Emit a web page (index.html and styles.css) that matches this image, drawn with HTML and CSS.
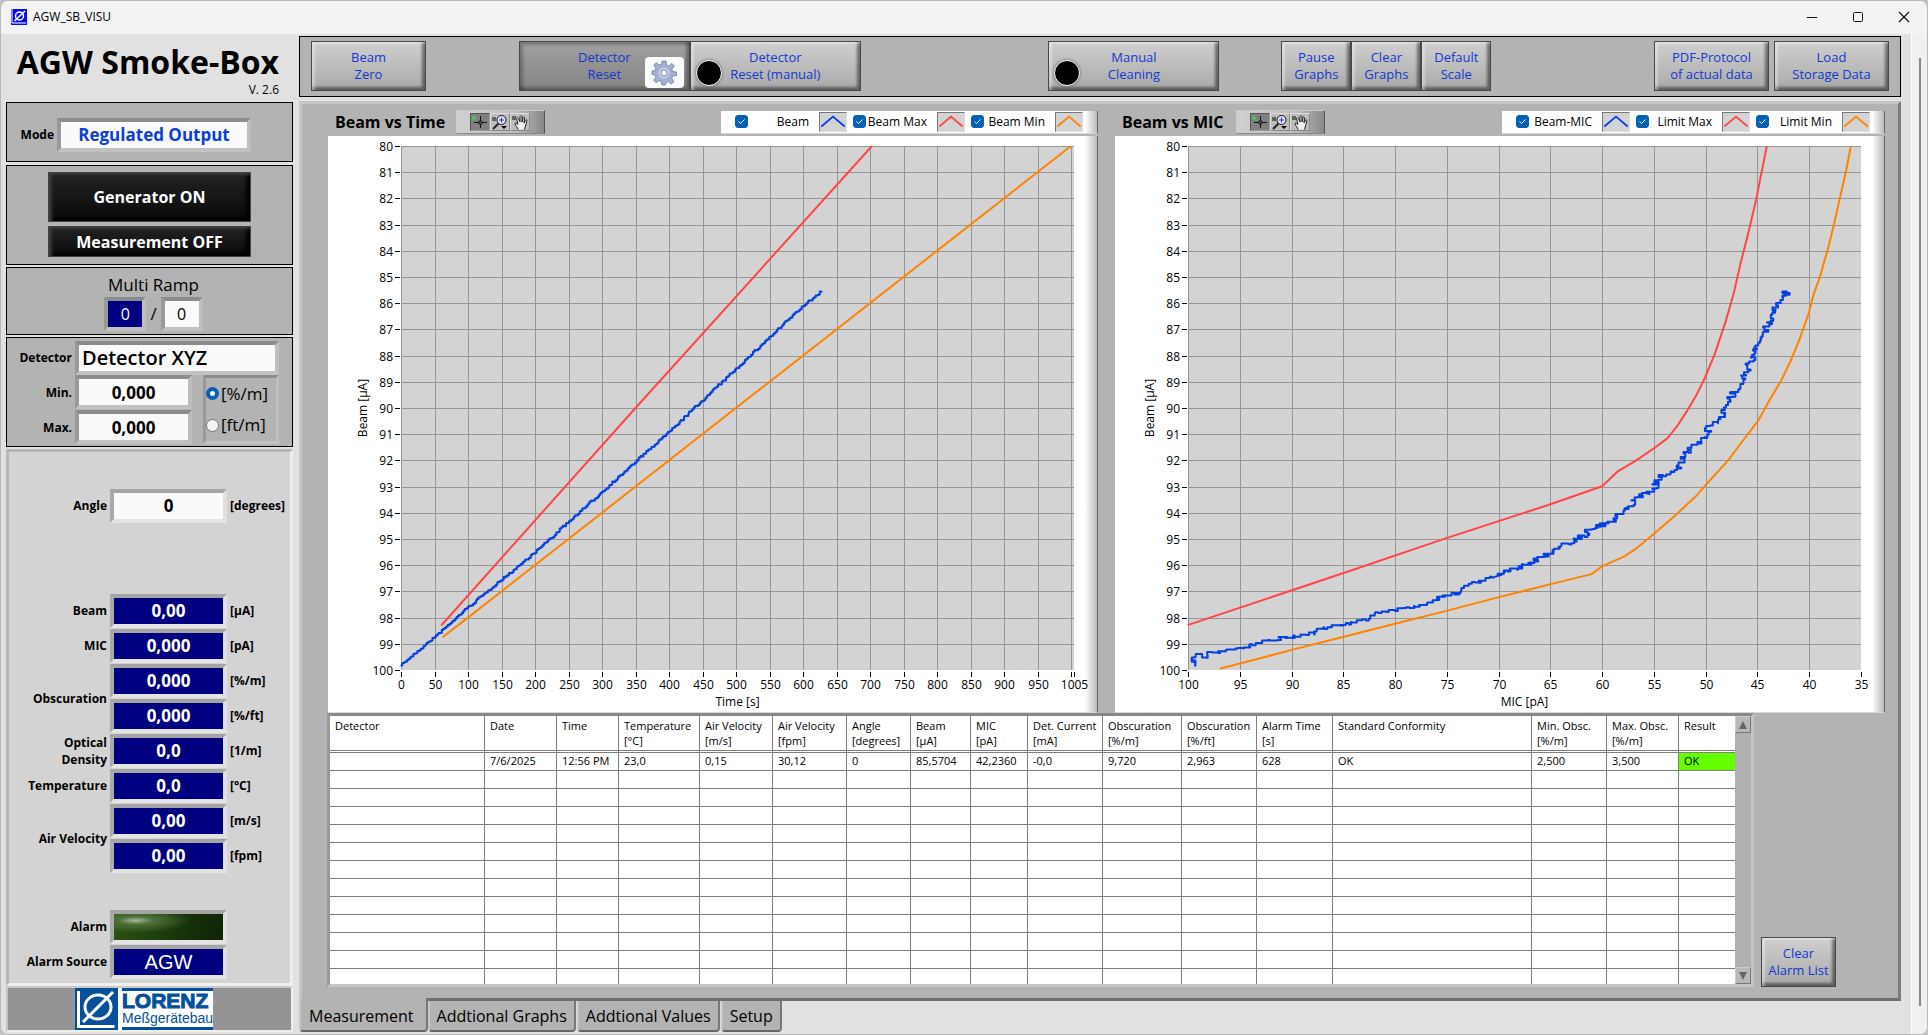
FILE: index.html
```html
<!DOCTYPE html>
<html lang="en">
<head>
<meta charset="utf-8">
<title>AGW_SB_VISU</title>
<link rel="stylesheet" href="styles.css">
</head>
<body>
<div class="window">
  <header class="titlebar">
    <svg class="app-icon" width="16" height="16" viewBox="0 0 16 16"><rect width="16" height="16" fill="#0a0af0"/><path d="M1 0v14h14" fill="none" stroke="#fff"/><circle cx="8.500" cy="7" r="4" fill="none" stroke="#fff" stroke-width="1.500"/><path d="M3.500 12 14 2" stroke="#fff" stroke-width="1.500"/></svg>
    <span class="titlebar-text">AGW_SB_VISU</span>
    <div class="window-controls">
      <button class="window-button" aria-label="Minimize"><svg width="12" height="12" viewBox="0 0 12 12"><path d="M1 6.500h10" stroke="#111"/></svg></button>
      <button class="window-button" aria-label="Maximize"><svg width="12" height="12" viewBox="0 0 12 12"><rect x="1.500" y="1.500" width="9" height="9" rx="1" fill="none" stroke="#111"/></svg></button>
      <button class="window-button" aria-label="Close"><svg width="12" height="12" viewBox="0 0 12 12"><path d="M1 1l10 10M11 1 1 11" stroke="#111" stroke-width="1.200"/></svg></button>
    </div>
  </header>

  <div class="body">
    <aside class="side">
      <div class="brand">
        <h1 class="brand-name">AGW Smoke-Box</h1>
        <div class="brand-version">V. 2.6</div>
      </div>

      <section class="box box-mode">
        <label class="label" for="mode">Mode</label>
        <input class="field field-mode" id="mode" value="Regulated Output" readonly>
      </section>

      <section class="box box-power">
        <button class="power power-tall">Generator ON</button>
        <button class="power">Measurement OFF</button>
      </section>

      <section class="box box-ramp">
        <div class="ramp-title">Multi Ramp</div>
        <div class="ramp-row">
          <output class="field field-ramp field-navy">0</output>
          <span class="ramp-slash">/</span>
          <input class="field field-ramp" value="0" aria-label="Ramp count">
        </div>
      </section>

      <section class="box box-detector">
        <label class="label" for="detector">Detector</label>
        <input class="field field-name" id="detector" value="Detector XYZ">
        <label class="label" for="min">Min.</label>
        <input class="field" id="min" value="0,000">
        <label class="label" for="max">Max.</label>
        <input class="field field-max" id="max" value="0,000">
        <div class="units">
          <label class="unit-choice"><input class="radio" type="radio" name="unit" checked>[%/m]</label>
          <label class="unit-choice"><input class="radio" type="radio" name="unit">[ft/m]</label>
        </div>
      </section>

      <section class="readouts">
        <div class="readout-grid">
          <label class="label" for="angle">Angle</label>
          <input class="field" id="angle" value="0"><span class="unit">[degrees]</span>
        </div>
        <div class="readout-grid readout-values">
          <label class="label" for="beam">Beam</label>
          <output class="field field-navy" id="beam">0,00</output><span class="unit">[µA]</span>
          <label class="label" for="mic">MIC</label>
          <output class="field field-navy" id="mic">0,000</output><span class="unit">[pA]</span>
          <label class="label label-double" for="obsc">Obscuration</label>
          <output class="field field-navy" id="obsc">0,000</output><span class="unit">[%/m]</span>
          <output class="field field-navy">0,000</output><span class="unit">[%/ft]</span>
          <label class="label" for="density">Optical<br>Density</label>
          <output class="field field-navy" id="density">0,0</output><span class="unit">[1/m]</span>
          <label class="label" for="temp">Temperature</label>
          <output class="field field-navy" id="temp">0,0</output><span class="unit">[°C]</span>
          <label class="label label-double" for="air">Air Velocity</label>
          <output class="field field-navy" id="air">0,00</output><span class="unit">[m/s]</span>
          <output class="field field-navy">0,00</output><span class="unit">[fpm]</span>
        </div>
        <div class="readout-grid">
          <span class="label">Alarm</span>
          <span class="field field-led"></span><span></span>
          <label class="label" for="source">Alarm Source</label>
          <output class="field field-navy field-source" id="source">AGW</output><span></span>
        </div>
      </section>

      <div class="logo-bar">
        <div class="logo">
          <svg width="43" height="42" viewBox="0 0 43 42"><rect width="43" height="42" fill="#05509c"/><path d="M3.500 3v35.500h36" fill="none" stroke="#fff" stroke-width="3"/><ellipse cx="23" cy="19" rx="13" ry="12" fill="none" stroke="#fff" stroke-width="3"/><path d="M8 34 38 4" stroke="#fff" stroke-width="3"/></svg>
          <div class="logo-text"><span class="logo-name">LORENZ</span><span class="logo-sub">Meßgerätebau</span></div>
        </div>
      </div>
    </aside>

    <main class="main">
      <div class="toolbar">
        <button class="btn btn-mid">Beam<br>Zero</button>
        <span class="space-a"></span>
        <button class="btn btn-wide btn-pressed">Detector<br>Reset
          <span class="gear"><svg width="26" height="26" viewBox="0 0 26 26"><g fill="#a3b0d0" stroke="#7080a8" stroke-width=".8"><path d="M11 1h4l.6 4 2.200.9L21 3.400 23.300 6l-2.500 3.200.9 2.300 3.800.5v3.500l-3.800.6-1 2.300 2.300 3.200-2.600 2.500-3.200-2.400-2.200.9L14.500 25h-3.500l-.7-3.600-2.300-.9-3 2.300-2.500-2.500 2.300-3-.9-2.200L1 14.500V11l3-.5.900-2.200L2.700 5.200l2.500-2.500L8.300 5l2.200-.9z"/></g><circle cx="13" cy="13" r="5.500" fill="#c3cce4"/><circle cx="13" cy="13" r="3" fill="#fff" stroke="#8090b5"/></svg></span>
        </button>
        <button class="btn btn-wide">Detector<br>Reset (manual)<span class="led"></span></button>
        <span class="space-b"></span>
        <button class="btn btn-wide">Manual<br>Cleaning<span class="led"></span></button>
        <span class="space-c"></span>
        <button class="btn btn-small">Pause<br>Graphs</button>
        <button class="btn btn-small">Clear<br>Graphs</button>
        <button class="btn btn-small">Default<br>Scale</button>
        <span class="space-d"></span>
        <button class="btn btn-mid">PDF-Protocol<br>of actual data</button>
        <span class="space-e"></span>
        <button class="btn btn-mid">Load<br>Storage Data</button>
      </div>

      <div class="page">
        <div class="charts">
          <section class="chart chart-time">
            <div class="chart-head">
              <h2 class="chart-title">Beam vs Time</h2>
              <div class="palette">
                <button class="tool tool-on" aria-label="Cursor"><svg width="18" height="16" viewBox="0 0 18 16"><circle cx="3" cy="4" r="2" fill="#4c4"/><path d="M9.500 2v12M3 8.500h13" stroke="#111"/><circle cx="9.500" cy="8.500" r="1.800" fill="#555" stroke="#111"/></svg></button>
                <button class="tool" aria-label="Zoom"><svg width="18" height="16" viewBox="0 0 18 16"><path d="M1 3h4v4H1z" fill="#576b4d"/><circle cx="10.500" cy="6" r="4.500" fill="#e4e4ff" stroke="#111"/><path d="M8 6h5M10.500 3.500v5" stroke="#33a"/><path d="M7.500 9.500 2 15" stroke="#222" stroke-width="2"/><path d="M10 12h6l-3 3z"/></svg></button>
                <button class="tool" aria-label="Pan"><svg width="18" height="16" viewBox="0 0 18 16"><path d="M1 2h4v4H1z" fill="#576b4d"/><path d="M7 15.500c0-2-3-4-3-6 1-1 2 0 3 1L5.500 4.500c.5-1 1.500-1 2 0L9 8V2.500c.5-1 1.500-1 2 0V8l1-4.500c.5-1 1.500-.5 1.500.5L13 9l1.500-3c.5-.8 1.500-.3 1.500.7L14.500 12l-1 3.500" fill="#eee" stroke="#222"/></svg></button>
              </div>
              <div class="legend">
                <label class="legend-item"><input class="check" type="checkbox" checked><span>Beam</span><svg class="swatch swatch-blue" width="28" height="20" viewBox="0 0 28 20"><path d="M1 15 14 4l13 11"/></svg></label>
                <label class="legend-item"><input class="check" type="checkbox" checked><span>Beam Max</span><svg class="swatch swatch-red" width="28" height="20" viewBox="0 0 28 20"><path d="M1 15 14 4l13 11"/></svg></label>
                <label class="legend-item"><input class="check" type="checkbox" checked><span>Beam Min</span><svg class="swatch swatch-orange" width="28" height="20" viewBox="0 0 28 20"><path d="M1 15 14 4l13 11"/></svg></label>
              </div>
            </div>
            <div class="graph"><svg class="plot" id="time-plot" viewBox="0 0 769 576"></svg></div>
          </section>

          <section class="chart chart-mic">
            <div class="chart-head">
              <h2 class="chart-title">Beam vs MIC</h2>
              <div class="palette">
                <button class="tool tool-on" aria-label="Cursor"><svg width="18" height="16" viewBox="0 0 18 16"><circle cx="3" cy="4" r="2" fill="#4c4"/><path d="M9.500 2v12M3 8.500h13" stroke="#111"/><circle cx="9.500" cy="8.500" r="1.800" fill="#555" stroke="#111"/></svg></button>
                <button class="tool" aria-label="Zoom"><svg width="18" height="16" viewBox="0 0 18 16"><path d="M1 3h4v4H1z" fill="#576b4d"/><circle cx="10.500" cy="6" r="4.500" fill="#e4e4ff" stroke="#111"/><path d="M8 6h5M10.500 3.500v5" stroke="#33a"/><path d="M7.500 9.500 2 15" stroke="#222" stroke-width="2"/><path d="M10 12h6l-3 3z"/></svg></button>
                <button class="tool" aria-label="Pan"><svg width="18" height="16" viewBox="0 0 18 16"><path d="M1 2h4v4H1z" fill="#576b4d"/><path d="M7 15.500c0-2-3-4-3-6 1-1 2 0 3 1L5.500 4.500c.5-1 1.500-1 2 0L9 8V2.500c.5-1 1.500-1 2 0V8l1-4.500c.5-1 1.500-.5 1.500.5L13 9l1.500-3c.5-.8 1.500-.3 1.500.7L14.500 12l-1 3.500" fill="#eee" stroke="#222"/></svg></button>
              </div>
              <div class="legend">
                <label class="legend-item"><input class="check" type="checkbox" checked><span>Beam-MIC</span><svg class="swatch swatch-blue" width="28" height="20" viewBox="0 0 28 20"><path d="M1 15 14 4l13 11"/></svg></label>
                <label class="legend-item"><input class="check" type="checkbox" checked><span>Limit Max</span><svg class="swatch swatch-red" width="28" height="20" viewBox="0 0 28 20"><path d="M1 15 14 4l13 11"/></svg></label>
                <label class="legend-item"><input class="check" type="checkbox" checked><span>Limit Min</span><svg class="swatch swatch-orange" width="28" height="20" viewBox="0 0 28 20"><path d="M1 15 14 4l13 11"/></svg></label>
              </div>
            </div>
            <div class="graph"><svg class="plot" id="mic-plot" viewBox="0 0 769 576"></svg></div>
          </section>
        </div>

        <div class="log">
          <div class="log-frame">
            <div class="log-scroll">
              <table class="log-table">
                <colgroup><col class="w155"><col class="w72"><col class="w62"><col class="w81"><col class="w73"><col class="w74"><col class="w64"><col class="w60"><col class="w57"><col class="w75"><col class="w79"><col class="w75"><col class="w76"><col class="w199"><col class="w75"><col class="w72"><col class="w58"></colgroup>
                <thead><tr><th>Detector</th><th>Date</th><th>Time</th><th>Temperature<br>[°C]</th><th>Air Velocity<br>[m/s]</th><th>Air Velocity<br>[fpm]</th><th>Angle<br>[degrees]</th><th>Beam<br>[µA]</th><th>MIC<br>[pA]</th><th>Det. Current<br>[mA]</th><th>Obscuration<br>[%/m]</th><th>Obscuration<br>[%/ft]</th><th>Alarm Time<br>[s]</th><th>Standard Conformity</th><th>Min. Obsc.<br>[%/m]</th><th>Max. Obsc.<br>[%/m]</th><th>Result</th></tr></thead>
                <tbody id="log-rows"><tr><td></td><td>7/6/2025</td><td>12:56 PM</td><td>23,0</td><td>0,15</td><td>30,12</td><td>0</td><td>85,5704</td><td>42,2360</td><td>-0,0</td><td>9,720</td><td>2,963</td><td>628</td><td>OK</td><td>2,500</td><td>3,500</td><td class="pass">OK</td></tr></tbody>
              </table>
            </div>
            <div class="scrollbar">
              <button class="arrow" aria-label="Scroll up"><svg width="8" height="8" viewBox="0 0 8 8"><path d="M4 0l4 8H0z" fill="#666"/></svg></button>
              <button class="arrow" aria-label="Scroll down"><svg width="8" height="8" viewBox="0 0 8 8"><path d="M0 0h8L4 8z" fill="#666"/></svg></button>
            </div>
          </div>
          <button class="btn btn-clear">Clear<br>Alarm List</button>
        </div>
      </div>

      <nav class="tabs">
        <button class="tab tab-active">Measurement</button>
        <button class="tab">Addtional Graphs</button>
        <button class="tab">Addtional Values</button>
        <button class="tab">Setup</button>
      </nav>
    </main>

    <div class="window-scroll"><span class="window-thumb"></span></div>
  </div>
</div>
<script src="charts.js"></script>
</body>
</html>
```
FILE: styles.css
```css
* { box-sizing: border-box; }

body {
  margin: 0;
  background: #c4c4c4;
  color: #000;
  font-family: "Open Sans", "Noto Sans", sans-serif;
  font-size: 12px;
}

button, input, output { font-family: inherit; color: inherit; }
button { padding: 0; cursor: default; }
h1, h2 { margin: 0; }

.window {
  display: flex;
  flex-direction: column;
  min-height: 100vh;
  border: 1px solid #b8b8b8;
  border-radius: 8px;
  overflow: hidden;
  background: #e1e1e1;
}

/* Title bar */
.titlebar {
  display: flex;
  align-items: center;
  gap: 6px;
  height: 33px;
  padding: 0 17px 2px 10px;
  background: #f3f3f3;
}
.titlebar-text { flex: 1; line-height: 16px; }
.window-controls { display: flex; gap: 34px; }
.window-button { display: flex; width: 12px; height: 12px; border: 0; background: none; }

.body { display: flex; flex: 1; }

/* Left column */
.side {
  flex: none;
  display: flex;
  flex-direction: column;
  width: 292px;
  padding: 0 0 2px 5px;
}
.brand { height: 68px; padding: 8px 14px 0 0; text-align: right; }
.brand-name { font-size: 32px; line-height: 40px; white-space: nowrap; }
.brand-version { line-height: 16px; }

.box {
  margin-bottom: 3px;
  border: 1px solid #000;
  background: #b3b3b3;
}
.label { font-size: 12px; font-weight: 700; line-height: 17px; text-align: right; white-space: nowrap; }
.field {
  display: block;
  width: 100%;
  height: 34px;
  padding: 0 2px;
  border: 4px solid;
  border-color: #8c8c8c #bebebe #c2c2c2 #999;
  background: #fafafa;
  font-size: 17px;
  font-weight: 700;
  line-height: 26px;
  text-align: center;
  outline: 0;
}
.field-navy { background: #000080; color: #fff; }

.box-mode {
  display: flex;
  align-items: center;
  gap: 3px;
  height: 60px;
  padding: 5px 41px 0 12px;
}
.box-mode .label { width: 35px; }
.field-mode { color: #0a40d8; flex: 1; min-width: 0; }

.box-power {
  display: flex;
  flex-direction: column;
  gap: 4px;
  height: 100px;
  margin-bottom: 2px;
  padding: 6px 41px;
}
.power {
  height: 31px;
  border: 1px solid #444;
  background: linear-gradient(#232323, #090909);
  box-shadow: inset 3px 2px 3px #3a3a3a, inset -4px -3px 4px #000;
  color: #fff;
  font-size: 16px;
  font-weight: 700;
}
.power-tall { height: 50px; }

.box-ramp { height: 68px; padding: 5px 0 0 8px; margin-bottom: 2px; text-align: center; }
.ramp-title { font-size: 17px; line-height: 24px; }
.ramp-row { display: flex; justify-content: center; gap: 4px; }
.field-ramp { width: 42px; font-size: 16px; font-weight: 400; }
.ramp-slash { font-size: 17px; line-height: 34px; }

.box-detector {
  display: grid;
  grid-template-columns: 65px 117px 84px;
  grid-template-rows: 33px 34px 34px;
  gap: 1px 3px;
  align-items: center;
  height: 110px;
  padding-top: 3px;
  margin-bottom: 2px;
}
.field-name { grid-column: 2 / 4; padding-left: 3px; font-size: 20px; font-weight: 600; text-align: left; }
.field-max { grid-column: 2; }
.units {
  grid-area: 2 / 3 / 4 / 4;
  display: flex;
  flex-direction: column;
  justify-content: space-around;
  height: 69px;
  margin-left: 8px;
  border: 3px solid;
  border-color: #8c8c8c #bebebe #c2c2c2 #999;
}
.unit-choice { display: flex; align-items: center; gap: 2px; font-size: 17px; line-height: 24px; white-space: nowrap; }
.radio {
  appearance: none;
  flex: none;
  width: 13px;
  height: 13px;
  margin: 0;
  border: 1px solid #777;
  border-radius: 50%;
  background: #f4f4f4;
}
.radio:checked { border: 4px solid #0560b8; background: #fff; }

.readouts {
  flex: 1;
  padding-top: 36px;
  border: 3px solid;
  border-color: #b4b4b4 #ededed #f0f0f0 #b8b8b8;
  background: #d3d3d3;
}
.readout-grid {
  display: grid;
  grid-template-columns: 98px 117px 1fr;
  grid-auto-rows: 35px;
  column-gap: 3px;
  align-items: center;
}
.readout-values { margin: 70px 0 36px; }
.readouts .field { border-color: #a5a5a5 #e0e0e0 #e4e4e4 #aaa; }
.label-double { grid-row: span 2; }
.unit { font-size: 12px; font-weight: 700; line-height: 17px; }
.readouts .field-led {
  background: radial-gradient(ellipse at 20% 25%, #a9ba9c, #4d7038 14%, transparent 45%), linear-gradient(100deg, #2b5212, #14300a 70%, #102404);
}
.field-source { font-family: "Liberation Sans", sans-serif; font-size: 20px; font-weight: 400; }

.logo-bar {
  display: flex;
  justify-content: center;
  height: 46px;
  padding-right: 11px;
  border: 2px solid;
  border-color: #c9c9c9 #eee #eee #c4c4c4;
  background: #949494;
}
.logo { display: flex; height: 42px; background: #fff; }
.logo-text {
  display: flex;
  flex-direction: column;
  margin-left: 4px;
  border: solid #05509c;
  border-width: 3px 0;
  color: #05509c;
  font-family: "Liberation Sans", sans-serif;
}
.logo-name { font-size: 21px; font-weight: 700; line-height: 19px; -webkit-text-stroke: 1px #05509c; }
.logo-sub { font-size: 14px; line-height: 16px; }

/* Main column */
.main { flex: 1; min-width: 0; padding: 2px 10px 3px 6px; display: flex; flex-direction: column; }

.toolbar {
  display: flex;
  height: 61px;
  margin-bottom: 4px;
  padding: 4px 11px;
  border: 1px solid #000;
  background: #b3b3b3;
}
.btn {
  position: relative;
  flex: none;
  height: 50px;
  border: 1px solid #484848;
  background: linear-gradient(#cfcfcf, #c2c2c2 35%, #a9a9a9);
  box-shadow: inset 3px 2px 2px rgba(255, 255, 255, .35), inset -3px -3px 3px rgba(0, 0, 0, .45);
  color: #1238cf;
  font-size: 13px;
  line-height: 17px;
}
.btn-pressed {
  background: linear-gradient(#a3a3a3, #949494 40%, #858585);
  box-shadow: inset 3px 3px 3px rgba(0, 0, 0, .25), inset -3px -3px 3px rgba(0, 0, 0, .3);
}
.btn-mid { width: 115px; }
.btn-wide { width: 171px; }
.btn-small { width: 70px; }
.space-a { flex: 93; }
.space-b { flex: 188; }
.space-c { flex: 62; }
.space-d { flex: 163; }
.space-e { flex: 5; }
.led {
  position: absolute;
  left: 5px;
  bottom: 4px;
  width: 26px;
  height: 26px;
  border: 1px solid #fff;
  border-radius: 50%;
  background: #000;
  box-shadow: 0 0 3px #666;
}
.gear {
  position: absolute;
  right: 5px;
  bottom: 2px;
  display: flex;
  align-items: center;
  justify-content: center;
  width: 39px;
  height: 31px;
  border-radius: 4px;
  background: #fbfbfb;
}

.page {
  flex: 1;
  padding: 6px 13px 11px 26px;
  border: 3px solid;
  border-color: #c6c6c6 #7c7c7c #6e6e6e #c6c6c6;
  background: #b3b3b3;
}
.charts { display: grid; grid-template-columns: 1fr 1fr; gap: 17px; }
.chart { min-width: 0; }
.chart-head { display: flex; align-items: center; height: 26px; padding-bottom: 2px; }
.chart-title { width: 128px; padding-left: 7px; font-size: 16px; line-height: 24px; white-space: nowrap; }
.chart-mic .chart-title { width: 121px; }
.palette {
  display: flex;
  align-items: center;
  width: 89px;
  height: 24px;
  padding-left: 13px;
  border: 1px solid;
  border-color: #ccc #555 #888 #ccc;
  background: linear-gradient(90deg, #d0d0d0, #bbb 70%, #888);
}
.tool {
  display: flex;
  align-items: center;
  width: 20px;
  height: 18px;
  border: 1px solid;
  border-color: #ddd #888 #888 #ddd;
  background: #bdbdbd;
}
.tool-on { border-color: #555 #999 #999 #555; background: #808080; }
.legend {
  display: flex;
  align-items: center;
  gap: 6px;
  height: 23px;
  margin-left: auto;
  padding: 0 14px;
  border-right: 1px solid #666;
  border-bottom: 1px solid #d5d5d5;
  background: linear-gradient(90deg, transparent calc(100% - 12px), #bbb), #fff;
}
.legend-item { display: flex; align-items: center; width: 112px; height: 20px; }
.chart-mic .legend-item { width: 114px; }
.legend-item span { flex: 1; padding-right: 10px; text-align: right; white-space: nowrap; }
.check {
  appearance: none;
  flex: none;
  width: 13px;
  height: 13px;
  margin: 0;
  border: 1px solid #777;
  border-radius: 3px;
}
.check:checked {
  border-color: #0560b8;
  background: #0560b8 url("data:image/svg+xml,%3Csvg xmlns='http://www.w3.org/2000/svg' viewBox='0 0 11 11'%3E%3Cpath d='M2.500 5.500l2 2 4-4' fill='none' stroke='white'/%3E%3C/svg%3E");
}
.swatch { border: 1px solid; border-color: #777 #ddd #ddd #777; background: #d3d3d3; fill: none; stroke-width: 2; }
.swatch-blue { stroke: #0540e0; }
.swatch-red { stroke: #ff4545; }
.swatch-orange { stroke: #ff8200; }

.graph {
  border-right: 1px solid #666;
  border-bottom: 1px solid #d8d8d8;
  background: linear-gradient(90deg, transparent calc(100% - 12px), #bbb), #fff;
}
.plot { display: block; width: 100%; height: auto; font-size: 12px; }
.grid { stroke: #969696; shape-rendering: crispEdges; }
.tick { stroke: #000; shape-rendering: crispEdges; }
.curve { fill: none; stroke-width: 2; stroke-linejoin: round; }

/* Alarm log */
.log { display: flex; align-items: flex-end; gap: 7px; padding-right: 49px; margin-left: -1px; }
.log-frame {
  flex: 1;
  min-width: 0;
  display: flex;
  height: 274px;
  border: 3px solid;
  border-color: #888 #c4c4c4 #c6c6c6 #999;
  background: #fff;
}
.log-scroll { flex: 1; min-width: 0; overflow: hidden; }
.log-table { width: 100%; table-layout: fixed; border-collapse: separate; border-spacing: 0; font-size: 11px; }
.log-table th, .log-table td {
  height: 18px;
  padding: 0 0 0 5px;
  border-right: 1px solid #808080;
  border-bottom: 1px solid #808080;
  font-weight: 400;
  line-height: 15px;
  text-align: left;
  vertical-align: top;
  white-space: nowrap;
}
.log-table th { height: 37px; padding-top: 2px; border-bottom: 3px double #808080; }
.log-table tr > :last-child { border-right: 0; }
.log-table .pass { background: #66ff00; }
.w155 { width: 155px; } .w72 { width: 72px; } .w62 { width: 62px; } .w81 { width: 81px; }
.w73 { width: 73px; } .w74 { width: 74px; } .w64 { width: 64px; } .w60 { width: 60px; }
.w57 { width: 57px; } .w75 { width: 75px; } .w79 { width: 79px; } .w76 { width: 76px; }
.w199 { width: 199px; } .w58 { width: 58px; }
.scrollbar {
  display: flex;
  flex-direction: column;
  justify-content: space-between;
  width: 16px;
  background: #b0b0b0;
}
.arrow {
  display: flex;
  align-items: center;
  justify-content: center;
  height: 17px;
  border: 1px solid;
  border-color: #ccc #777 #777 #ccc;
  background: #b8b8b8;
}
.btn-clear { width: 75px; }

/* Page tabs */
.tabs { display: flex; align-items: flex-start; height: 30px; }
.tab {
  height: 31px;
  margin-right: 1px;
  padding: 0 7px;
  border: 2px solid;
  border-color: #777 #777 #666 #c6c6c6;
  border-top-width: 0;
  border-radius: 0 0 4px 4px;
  background: #b3b3b3;
  font-size: 16px;
  line-height: 28px;
  white-space: nowrap;
}
.tab-active { position: relative; height: 34px; margin: -3px 0 0; padding: 4px 12px 0 8px; }

.window-scroll {
  flex: none;
  display: flex;
  justify-content: center;
  width: 16px;
  padding: 24px 0 28px;
  border-left: 1px solid #fff;
  background: #f0f0f0;
}
.window-thumb { width: 2px; background: #868686; }
```
FILE: charts.js
```js
const NS = "http://www.w3.org/2000/svg";
const TOP = 10, BOTTOM = 534, LEFT = 73;

function add(svg, name, attrs, text) {
  const el = document.createElementNS(NS, name);
  for (const key in attrs) el.setAttribute(key, attrs[key]);
  if (text) el.textContent = text;
  svg.appendChild(el);
}

const yOf = value => TOP + (value - 80) * (BOTTOM - TOP) / 20;

function axes(svg, right, ticks, xOf, title) {
  add(svg, "rect", { x: LEFT, y: TOP, width: right - LEFT, height: BOTTOM - TOP, fill: "#d3d3d3" });
  for (let v = 80; v <= 100; v++) {
    const y = Math.round(yOf(v)) + 0.5;
    if (v < 100) add(svg, "path", { class: "grid", d: `M${LEFT} ${y}H${right}` });
    add(svg, "path", { class: "tick", d: `M${LEFT - 6} ${y}h5` });
    add(svg, "text", { x: LEFT - 8, y: y + 4, "text-anchor": "end" }, String(v));
  }
  for (const v of ticks) {
    const x = Math.round(xOf(v)) + 0.5;
    if (x < right) add(svg, "path", { class: "grid", d: `M${x} ${TOP}V${BOTTOM}` });
    add(svg, "path", { class: "tick", d: `M${x} ${BOTTOM + 2}v5` });
    if (v !== 1000) add(svg, "text", { x, y: BOTTOM + 19, "text-anchor": "middle" }, String(v));
  }
  add(svg, "text", { x: (LEFT + right) / 2, y: BOTTOM + 36, "text-anchor": "middle" }, title);
  add(svg, "text", { transform: "translate(39 272) rotate(-90)", "text-anchor": "middle" }, "Beam [µA]");
}

function curve(svg, points, color) {
  add(svg, "path", { class: "curve", stroke: color, d: "M" + points.map(p => p[0].toFixed(1) + " " + p[1].toFixed(1)).join("L") });
}

let seed = 7;
function random() {
  seed = (seed * 16807) % 2147483647;
  return seed / 2147483647 - 0.5;
}

/* Sensor trace: walks along the points with measurement jitter. */
function noisy(points, step, dx, dy) {
  const out = [];
  for (let i = 1; i < points.length; i++) {
    const [x0, y0] = points[i - 1], [x1, y1] = points[i];
    const n = Math.max(1, Math.round(Math.hypot(x1 - x0, y1 - y0) / step));
    for (let k = 0; k < n; k++) {
      const t = k / n;
      const x = x0 + (x1 - x0) * t + random() * dx;
      const y = y0 + (y1 - y0) * t + random() * dy;
      if (out.length) out.push([x, out[out.length - 1][1]]);
      out.push([x, y]);
    }
  }
  return out;
}

const time = document.getElementById("time-plot");
const timeX = v => LEFT + v * 0.67;
axes(time, 746, [...Array(21).keys()].map(i => i * 50).concat(1005), timeX, "Time [s]");
const at = list => list.map(([a, b]) => [timeX(a), yOf(b)]);
curve(time, at([[60, 98.3], [350, 90], [703, 80]]), "#ff4545");
curve(time, at([[62, 98.75], [100, 98], [1000, 80]]), "#ff8200");
curve(time, noisy(at([[0, 99.8], [50, 98.75], [100, 97.6], [200, 95.5], [300, 93.2], [400, 90.9], [500, 88.5], [600, 86.1], [630, 85.5]]), 2, 1, 2), "#0540e0");

const mic = document.getElementById("mic-plot");
const micX = v => LEFT + (100 - v) * 673 / 65;
axes(mic, 746, [...Array(14).keys()].map(i => 100 - i * 5), micX, "MIC [pA]");
const px = list => list.map(([a, b]) => [a / 1.894 - 15, b / 2.529 - 36]);
curve(mic, px([[166, 1328], [460, 1197], [656, 1108], [852, 1023], [951, 977], [980, 940], [1015, 912], [1050, 880], [1075, 855], [1093, 825], [1110, 790], [1128, 750], [1145, 705], [1165, 640], [1185, 560], [1200, 490], [1213, 415], [1228, 335], [1243, 250], [1252, 190], [1263, 117]]), "#ff4545");
curve(mic, px([[227, 1438], [300, 1413], [365, 1390], [460, 1358], [555, 1326], [656, 1292], [754, 1258], [852, 1225], [931, 1199], [950, 1180], [992, 1155], [1015, 1135], [1045, 1102], [1090, 1050], [1130, 1000], [1145, 977], [1190, 911], [1210, 875], [1247, 810], [1270, 755], [1290, 710], [1308, 660], [1325, 605], [1342, 540], [1352, 490], [1363, 450], [1380, 370], [1390, 315], [1402, 245], [1413, 180], [1422, 117]]), "#ff8200");

const trace = px([[170, 1415], [178, 1427], [173, 1412], [182, 1405], [195, 1412], [207, 1398], [235, 1395], [262, 1385], [300, 1375], [320, 1365], [365, 1358], [400, 1348], [420, 1335], [460, 1328], [498, 1315], [515, 1302], [550, 1292], [585, 1282], [625, 1268], [660, 1250], [680, 1245], [700, 1225], [735, 1212], [755, 1200], [800, 1180], [830, 1158], [855, 1145], [880, 1125], [910, 1108], [925, 1088], [950, 1075], [975, 1060], [985, 1042], [1002, 1028], [1012, 1008], [1038, 993], [1050, 980], [1053, 965], [1070, 945], [1095, 930], [1105, 905], [1120, 880], [1145, 855], [1155, 825], [1175, 800], [1185, 780], [1200, 740], [1215, 705], [1225, 680], [1240, 640], [1252, 600], [1267, 560], [1275, 535], [1285, 510], [1297, 482], [1305, 500]]);
curve(mic, noisy(trace.slice(0, 24), 3, 7, 3).concat(noisy(trace.slice(23), 2, 8, 3)), "#0540e0");

/* Empty lines of the alarm log */
const rows = document.getElementById("log-rows");
for (let i = 0; i < 12; i++) {
  const row = rows.insertRow();
  for (let c = 0; c < 17; c++) row.insertCell();
}
```
